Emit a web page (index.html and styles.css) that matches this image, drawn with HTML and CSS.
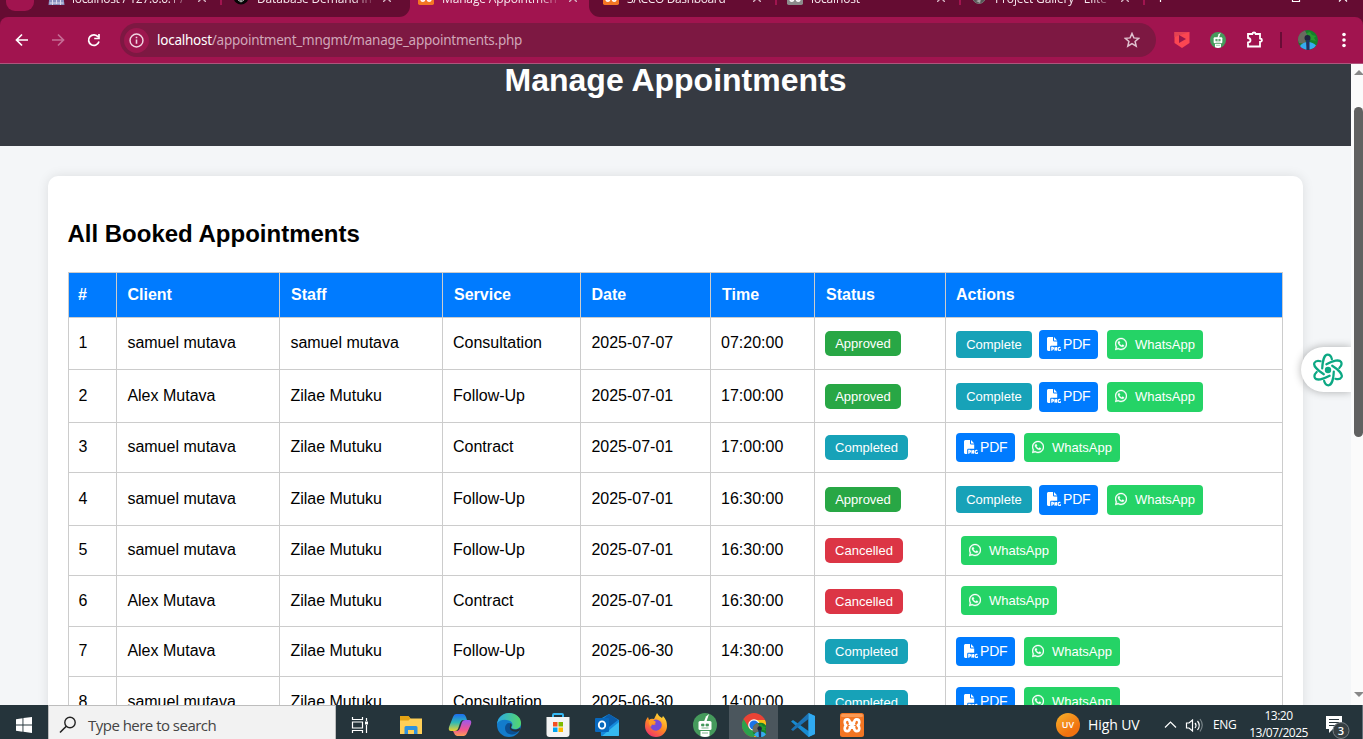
FILE: index.html
```html
<!DOCTYPE html>
<html lang="en">
<head>
<meta charset="utf-8">
<title>Manage Appointments</title>
<link rel="stylesheet" href="styles.css">
</head>
<body>
<svg class="defs" aria-hidden="true">
  <symbol id="wa" viewBox="0 0 448 512"><path stroke="#fff" stroke-width="14" d="M380.9 97.1C339 55.1 283.2 32 223.9 32c-122.4 0-222 99.6-222 222 0 39.1 10.2 77.3 29.6 111L0 480l117.7-30.9c32.4 17.7 68.9 27 106.1 27h.1c122.3 0 224.1-99.6 224.1-222 0-59.3-25.2-115-67.1-157zm-157 341.6c-33.2 0-65.7-8.9-94-25.7l-6.7-4-69.8 18.3L72 359.2l-4.4-7c-18.5-29.4-28.2-63.3-28.2-98.2 0-101.7 82.8-184.5 184.6-184.5 49.3 0 95.6 19.2 130.4 54.1 34.8 34.9 56.2 81.2 56.1 130.5 0 101.8-84.9 184.6-186.6 184.6zm101.2-138.2c-5.5-2.8-32.8-16.2-37.9-18-5.1-1.9-8.8-2.8-12.5 2.8-3.7 5.6-14.3 18-17.6 21.8-3.2 3.7-6.5 4.2-12 1.4-32.6-16.3-54-29.1-75.5-66-5.7-9.8 5.7-9.1 16.3-30.3 1.8-3.7.9-6.9-.5-9.7-1.4-2.8-12.5-30.1-17.1-41.2-4.5-10.8-9.1-9.3-12.5-9.5-3.2-.2-6.9-.2-10.6-.2-3.7 0-9.7 1.4-14.8 6.9-5.1 5.6-19.4 19-19.4 46.3 0 27.3 19.9 53.7 22.6 57.4 2.8 3.7 39.1 59.7 94.8 83.8 35.2 15.2 49 16.5 66.6 13.9 10.7-1.6 32.8-13.4 37.4-26.4 4.6-13 4.6-24.1 3.2-26.4-1.3-2.5-5-3.9-10.5-6.6z"/></symbol>
  <symbol id="file" viewBox="0 0 14 14"><path d="M1.600 0H6v3.600c0 .5.3.8.8.8H10.200v4.400H4.500c-.8 0-1.300.5-1.300 1.300V14H1.600C.7 14 0 13.400 0 12.500v-11C0 .6.7 0 1.600 0zM7 0l3.200 3.500H7z"/><path d="M4.800 13.800v-3.500h.8c1.200 0 1.200 1.800 0 1.800h-.8M8 13.800v-3.600l1.600 3.400v-3.500M13.400 10.600c-1.900-.8-2.200.5-2.200 1.400 0 1.500 1 1.800 2.200 1.300v-1.100" fill="none" stroke="#fff" stroke-width="1.200"/></symbol>
  <symbol id="xampp" viewBox="0 0 24 24"><rect width="24" height="24" rx="2.500" fill="#f37623"/><rect x="1" y="1" width="22" height="3" rx="1.500" fill="#fa9a55"/><path d="M10 9.800Q9.600 6.300 7.300 6.300 4.700 6.300 4.700 9.200 4.700 11.200 6.300 12.300 4.700 13.300 4.700 15.300 4.700 18.200 7.300 18.200 9.600 18.200 10 14.700H14Q14.400 18.200 16.700 18.200 19.300 18.200 19.300 15.300 19.300 13.300 17.700 12.300 19.300 11.200 19.300 9.200 19.300 6.300 16.700 6.300 14.400 6.300 14 9.800zM9 10.500l6 4M15 10.500l-6 4" fill="none" stroke="#fff" stroke-width="2.700" stroke-linejoin="round"/></symbol>
  <symbol id="bot" viewBox="0 0 24 24"><circle cx="12" cy="12" r="12" fill="#459a5c"/><g fill="#fff"><path d="M11 8.500l2-5 3-2.500-2.500 7.500z"/><rect x="5.500" y="8" width="13" height="9" rx="1.500"/><path d="M7.500 18h9v5q-4.500 2-9 0z"/></g><path d="M8.500 11h2.500v2H8.500zM13 11h2.500v2H13zM8.500 15h7M9 20h6" fill="#459a5c" stroke="#459a5c" stroke-width=".7"/></symbol>
  <symbol id="avatar" viewBox="0 0 20 20"><circle cx="10" cy="10" r="10" fill="#14812b"/><path d="M0 10a10 10 0 0 1 7-9.500l2 4L7 14l-6-1z" fill="#696b60"/><path d="M9 3l3-1 2 3 4 1-2 2 2 3-5-1-3-3z" fill="#279b2e"/><path d="M2 16q3-4 8-4t8 3.500A10 10 0 0 1 2 16z" fill="#36aaf0"/><circle cx="9.500" cy="8" r="3" fill="#20243f"/><path d="M8 10h3.500v10h-3z" fill="#20305d"/></symbol>
  <symbol id="close" viewBox="0 0 8 8"><path d="M0 0l8 8M8 0L0 8" fill="none" stroke="#d4b5c3" stroke-width="1.400"/></symbol>
</svg>

<div class="tabs">
  <div class="tabgroup left">
    <i class="tabsearch"></i>
    <div class="tab t1"><svg class="fav" viewBox="0 0 16 16"><path d="M0 16l1-9 3 3 2-6 3 5 2-4 2 5 2-2 1 8z" fill="#8890bf"/><path d="M1 14h14M4 16v-5M8 15v-5M12 16v-5" stroke="#d9d9ec"/></svg><span>localhost / 127.0.0.1 /</span><svg class="x"><use href="#close"/></svg></div>
    <i class="sep"></i>
    <div class="tab t2"><svg class="fav" viewBox="0 0 16 16"><circle cx="8" cy="8" r="7.500" fill="#060606"/><path d="M5 11l3 2 3-2V6M5 5v5l4 2" fill="none" stroke="#bbb"/></svg><span>Database Demand in</span><svg class="x"><use href="#close"/></svg></div>
  </div>
  <div class="tab active"><svg class="fav"><use href="#xampp"/></svg><span>Manage Appointmen</span><svg class="x"><use href="#close"/></svg></div>
  <div class="tabgroup right">
    <div class="tab t4"><svg class="fav"><use href="#xampp"/></svg><span>SACCO Dashboard</span><svg class="x"><use href="#close"/></svg></div>
    <i class="sep"></i>
    <div class="tab t5"><svg class="fav gray"><use href="#xampp"/></svg><span>localhost</span><svg class="x"><use href="#close"/></svg></div>
    <i class="sep"></i>
    <div class="tab t6"><svg class="fav" viewBox="0 0 16 16"><circle cx="8" cy="8" r="6.500" fill="#555" stroke="#777"/><path d="M5 12l5-2-1 4z" fill="#aaa"/></svg><span>Project Gallery - Elite</span><svg class="x"><use href="#close"/></svg></div>
    <i class="sep"></i>
    <svg class="winctl" viewBox="0 0 218 17"><path d="M15.500 0v2M147.500 0v1.500h7V0M194 1.500l2-2M200 -.5l2 2" fill="none" stroke="#fff" stroke-width="1.200"/></svg>
  </div>
</div>

<div class="toolwrap"><div class="toolbar">
  <svg class="nav" viewBox="0 0 120 46"><g fill="none" stroke="#fff" stroke-width="1.700"><path d="M28 23H17M22 17.500L16.500 23l5.500 5.500"/><path d="M52 23h11M58 17.500l5.500 5.500-5.500 5.500" stroke="#c56c94"/><path d="M98.200 20A5.300 5.300 0 1 0 99 24.500M99 17v4.500h-4.800"/></g></svg>
  <div class="omnibox">
    <svg class="info" viewBox="0 0 24 24"><circle cx="12" cy="12" r="12" fill="#9c174e"/><circle cx="12" cy="12" r="6.200" fill="none" stroke="#f0d5e1" stroke-width="1.400"/><path d="M12 11v4.200M12 8.500v1.400" stroke="#f0d5e1" stroke-width="1.500"/></svg>
    <span class="url"><b>localhost</b>/appointment_mngmt/manage_appointments.php</span>
    <svg class="star" viewBox="0 0 16 16"><path d="M8 1.500l1.900 4.400 4.800.4-3.600 3.100 1.100 4.700L8 11.600l-4.200 2.500 1.100-4.700-3.600-3.100 4.800-.4z" fill="none" stroke="#e1c3d0" stroke-width="1.500"/></svg>
  </div>
  <svg class="exts" viewBox="0 0 207 46">
    <path d="M18.500 15h15v11l-7.500 5-7.500-5z" fill="#fb4652"/><path d="M18.500 15h15l-15 5z" fill="#e34152"/><path d="M23 18l7 4-7 4z" fill="#98164b"/>
    <use href="#bot" x="54" y="15" width="16" height="16"/>
    <path d="M92 17h4.300q.2-1.500 1.700-1.500t1.700 1.500h4.300v4.500q2 .3 2 1.700t-2 1.700v4.600H92v-4q2.500-.2 2.500-2.200T92 21z" fill="none" stroke="#fff" stroke-width="1.800"/>
    <path d="M125 15v16" stroke="#690c36" stroke-width="2"/>
    <use href="#avatar" x="142" y="13" width="20" height="20"/>
    <g fill="#fff"><circle cx="188" cy="17.500" r="1.800"/><circle cx="188" cy="23" r="1.800"/><circle cx="188" cy="28.500" r="1.800"/></g>
  </svg>
</div></div>

<div class="viewport">
  <main class="page">
    <header class="hero"><h1>Manage Appointments</h1></header>
    <section class="card">
      <h2>All Booked Appointments</h2>
      <table>
        <colgroup><col class="c1"><col class="c2"><col class="c2"><col class="c4"><col class="c5"><col class="c6"><col class="c7"><col></colgroup>
        <thead><tr><th>#</th><th>Client</th><th>Staff</th><th>Service</th><th>Date</th><th>Time</th><th>Status</th><th>Actions</th></tr></thead>
        <tbody>
          <tr class="first"><td>1</td><td>samuel mutava</td><td>samuel mutava</td><td>Consultation</td><td>2025-07-07</td><td>07:20:00</td><td><span class="badge ok">Approved</span></td><td><div class="acts"><a class="done">Complete</a><a class="pdf"><svg><use href="#file"/></svg>PDF</a><a class="wa"><svg><use href="#wa"/></svg>WhatsApp</a></div></td></tr>
          <tr class="tall"><td>2</td><td>Alex Mutava</td><td>Zilae Mutuku</td><td>Follow-Up</td><td>2025-07-01</td><td>17:00:00</td><td><span class="badge ok">Approved</span></td><td><div class="acts"><a class="done">Complete</a><a class="pdf"><svg><use href="#file"/></svg>PDF</a><a class="wa"><svg><use href="#wa"/></svg>WhatsApp</a></div></td></tr>
          <tr><td>3</td><td>samuel mutava</td><td>Zilae Mutuku</td><td>Contract</td><td>2025-07-01</td><td>17:00:00</td><td><span class="badge fin">Completed</span></td><td><div class="acts"><a class="pdf"><svg><use href="#file"/></svg>PDF</a><a class="wa"><svg><use href="#wa"/></svg>WhatsApp</a></div></td></tr>
          <tr class="tall"><td>4</td><td>samuel mutava</td><td>Zilae Mutuku</td><td>Follow-Up</td><td>2025-07-01</td><td>16:30:00</td><td><span class="badge ok">Approved</span></td><td><div class="acts"><a class="done">Complete</a><a class="pdf"><svg><use href="#file"/></svg>PDF</a><a class="wa"><svg><use href="#wa"/></svg>WhatsApp</a></div></td></tr>
          <tr><td>5</td><td>samuel mutava</td><td>Zilae Mutuku</td><td>Follow-Up</td><td>2025-07-01</td><td>16:30:00</td><td><span class="badge no">Cancelled</span></td><td><div class="acts only"><a class="wa"><svg><use href="#wa"/></svg>WhatsApp</a></div></td></tr>
          <tr class="mid"><td>6</td><td>Alex Mutava</td><td>Zilae Mutuku</td><td>Contract</td><td>2025-07-01</td><td>16:30:00</td><td><span class="badge no">Cancelled</span></td><td><div class="acts only"><a class="wa"><svg><use href="#wa"/></svg>WhatsApp</a></div></td></tr>
          <tr><td>7</td><td>Alex Mutava</td><td>Zilae Mutuku</td><td>Follow-Up</td><td>2025-06-30</td><td>14:30:00</td><td><span class="badge fin">Completed</span></td><td><div class="acts"><a class="pdf"><svg><use href="#file"/></svg>PDF</a><a class="wa"><svg><use href="#wa"/></svg>WhatsApp</a></div></td></tr>
          <tr class="mid"><td>8</td><td>samuel mutava</td><td>Zilae Mutuku</td><td>Consultation</td><td>2025-06-30</td><td>14:00:00</td><td><span class="badge fin">Completed</span></td><td><div class="acts"><a class="pdf"><svg><use href="#file"/></svg>PDF</a><a class="wa"><svg><use href="#wa"/></svg>WhatsApp</a></div></td></tr>
        </tbody>
      </table>
    </section>
    <div class="helper"><svg viewBox="-16 -17 32 34"><defs><path id="orb" d="M-5.800 -1.500C-5.500 -9 -3.500 -15.300 -.5 -15.300C2 -15.300 3.300 -13.500 3.900 -10.800"/></defs><circle r="3.200" fill="#0ba883"/><g fill="none" stroke="#0ba883" stroke-width="2.200" stroke-linecap="round"><use href="#orb"/><use href="#orb" transform="rotate(60)"/><use href="#orb" transform="rotate(120)"/><use href="#orb" transform="rotate(180)"/><use href="#orb" transform="rotate(240)"/><use href="#orb" transform="rotate(300)"/></g></svg></div>
  </main>
  <div class="scroll"><i class="up"></i><i class="thumb"></i><i class="down"></i></div>
</div>

<footer class="taskbar">
  <div class="start"><svg width="16" height="16" viewBox="0 0 16 16"><path d="M0 2.200L6.500 1.300V7.500H0zM7.400 1.100L16 0v7.500H7.400zM0 8.400h6.500v6.300L0 13.800zM7.400 8.400H16V16l-8.600-1.200z" fill="#fff"/></svg></div>
  <div class="search"><svg width="18" height="18" viewBox="0 0 18 18"><circle cx="11" cy="6.500" r="5.200" fill="none" stroke="#222" stroke-width="1.400"/><path d="M7.300 10.200L1 16.500" stroke="#222" stroke-width="1.600"/></svg><span>Type here to search</span></div>
  <div class="view"><svg width="18" height="16" viewBox="0 0 18 16"><path d="M1.500 0v2.500h10V0M1.500 16v-2.500h10V16M1.500 5h10v6h-10zM15.500 1v3M15.500 8v8" fill="none" stroke="#fff" stroke-width="1.200"/><rect x="14" y="4.500" width="3" height="3" fill="#fff"/></svg></div>
  <div class="apps">
    <div><svg viewBox="0 0 24 24"><path d="M1 3.500h8.500l2 2H23V21H1z" fill="#ffcf57"/><path d="M1 3h8.500l2 2.500-2 2H1z" fill="#e4a314"/><path d="M5.500 21v-6.500q0-1.500 1.500-1.500h10q1.500 0 1.500 1.500V21h-3.500v-4h-6v4z" fill="#2f92de"/></svg></div>
    <div><svg viewBox="0 0 24 24"><defs><linearGradient id="ca" x2="0" y2="1"><stop stop-color="#1b6df0"/><stop offset=".5" stop-color="#30b9b5"/><stop offset="1" stop-color="#f1d12c"/></linearGradient><linearGradient id="cb" x2="0" y2="1"><stop stop-color="#9b58ed"/><stop offset=".6" stop-color="#f05591"/><stop offset="1" stop-color="#fb9e55"/></linearGradient></defs><path d="M8 1h7q2 0 3 3l1 3h-4q-2 0-3 3l-2 6q-1 2-3 2H3q-3 0-2-4L5 4q1-3 3-3z" fill="url(#ca)"/><path d="M16 23H9q-2 0-3-3l-1-2h4q2 0 3-3l2-6q1-2 3-2h4q3 0 2 4l-4 9q-1 3-3 3z" fill="url(#cb)"/></svg></div>
    <div><svg viewBox="0 0 24 24"><defs><linearGradient id="ed"><stop stop-color="#2ba8e7"/><stop offset="1" stop-color="#55d86a"/></linearGradient></defs><circle cx="12" cy="12" r="12" fill="#137ccb"/><path d="M0 11C1 4 6 0 12 0c7 0 12 4.500 12 10 0 4-3 6-6 6-3 0-4-1-3-2.500 1-2 .5-5-3-6C7 6 2 7 0 11z" fill="url(#ed)"/><path d="M8 15c0-3 2-5 4-5 2 .5 3 2 2 4-1 2 1 4 4 4q2.500 0 4-1c-2 4-5 5-8 4.500-4-.5-6-3-6-6.500z" fill="#0c4f91"/><path d="M13.500 10c2 1.500 1 3 .5 4-.5 2.500 5 4 9.500.500l-1 3.500c-5 2-11-.5-9.500-4.500z" fill="#263238"/></svg></div>
    <div><svg viewBox="0 0 24 24"><path d="M7 5V2q0-1 1-1h8q1 0 1 1v3" fill="none" stroke="#35b8f3" stroke-width="2"/><path d="M.5 4h23v17q0 3-3 3h-17q-3 0-3-3z" fill="#f3f3f3"/><path d="M7 9h4.500v4.500H7z" fill="#f25022"/><path d="M12.500 9H17v4.500h-4.500z" fill="#7fba00"/><path d="M7 14.500h4.500V19H7z" fill="#00a4ef"/><path d="M12.500 14.500H17V19h-4.500z" fill="#ffb900"/></svg></div>
    <div><svg viewBox="0 0 24 24"><path d="M5 6l9-5 10 6v15q0 1-1 1H6z" fill="#1689dc"/><path d="M9 5l5-4 9 6-9 7z" fill="#0b5ca9"/><path d="M24 9v13q0 1-1 1H7z" fill="#35baf1"/><rect y="5" width="14" height="14" rx="1" fill="#0868bd"/><ellipse cx="7" cy="12" rx="3.200" ry="3.600" fill="none" stroke="#fff" stroke-width="1.900"/></svg></div>
    <div><svg viewBox="0 0 24 24"><defs><linearGradient id="ff" x1=".8" x2=".2" y2="1"><stop stop-color="#ffe33b"/><stop offset=".5" stop-color="#ff8b20"/><stop offset="1" stop-color="#f02c71"/></linearGradient></defs><path d="M1 13q0-6 3-9l1 3q2-2 5-1l3-6q2 4 5 5l1-2q4 4 4 10a11 11 0 0 1-22 0z" fill="url(#ff)"/><path d="M8 8q4-3 8 0 3 3 1 7-3 4-8 2-4-3-2-6 2 2 5 0-3-1-4-3z" fill="#744bd8"/><path d="M5 7q4-1 7 2-1 2-4 2l-1 3q-3-3-2-7z" fill="#ff9b27"/></svg></div>
    <div><svg><use href="#bot"/></svg></div>
    <div class="current"><svg viewBox="0 0 24 24"><circle cx="12" cy="12" r="12" fill="#ea4335"/><path d="M1.600 6A12 12 0 0 0 12 24l5-9-5 2-5-2z" fill="#2ba24c"/><path d="M23 7H13l4 8-5 9A12 12 0 0 0 23 7z" fill="#fbc116"/><circle cx="12" cy="12" r="5.800" fill="#fff"/><circle cx="12" cy="12" r="4.600" fill="#1a73e8"/><use href="#avatar" x="10.500" y="9.500" width="15" height="15"/></svg></div>
    <div><svg viewBox="0 0 24 24"><path d="M17.500 0L24 3v18l-6.500 3L0 8.500 2 7l15.500 11z" fill="#178bd2"/><path d="M17.500 0v6L2 18l-2-1.500z" fill="#1c73b5"/><path d="M17.500 0L24 3v18l-6.500 3z" fill="#30aaf1"/></svg></div>
    <div><svg><use href="#xampp"/></svg></div>
  </div>
  <div class="tray">
    <span class="uv">UV</span><span class="weather">High UV</span>
    <svg class="ctl" viewBox="0 0 40 20"><g fill="none" stroke="#fff" stroke-width="1.200"><path d="M1 12.500l5.500-5.500 5.500 5.500M22.500 8h2.500l3.500-3v11L25 13h-2.500zM31 8q2 2.300 0 5M33.500 6q3.500 4.300 0 9"/><path d="M36 4q4.500 6 0 12.500" stroke="#788488"/></g></svg>
    <span class="lang">ENG</span>
    <span class="clock"><span>13:20</span><span>13/07/2025</span></span>
    <svg class="note" viewBox="0 0 28 24"><path d="M1 1h16v13h-9l-4 4v-4H1z" fill="#fff"/><path d="M4 4.500h10M4 7.500h10M4 10.500h8" stroke="#27343a"/><circle cx="16" cy="15.500" r="8" fill="#363f43" stroke="#788085"/><text x="16" y="19.500" class="count">3</text></svg>
    <i class="peek"></i>
  </div>
</footer>
</body>
</html>
```
FILE: styles.css
```css
* { box-sizing: border-box; }
body { margin: 0; width: 1363px; height: 739px; overflow: hidden; font-family: "Liberation Sans", Arial, sans-serif; color: #000; }
.defs { position: absolute; width: 0; height: 0; }
svg { display: block; flex: none; }

/* tab strip */
.tabs { display: flex; height: 17px; overflow: hidden; background: #a1144f; font: 12px/18px "Open Sans", "Noto Sans", sans-serif; color: #f6e8ee; }
.tabgroup { display: flex; height: 17px; background: #650c32; }
.left { width: 410px; border-radius: 0 0 11px 0; }
.right { width: 774px; border-radius: 0 0 0 11px; }
.tabsearch { width: 28px; height: 11px; margin: 0 13px 0 6px; background: #a1144f; border-radius: 0 0 9px 9px; }
.tab { display: flex; width: 184px; height: 17px; align-items: flex-start; }
.tab span { width: 123px; margin: -10px 0 0 8px; white-space: nowrap; overflow: hidden; letter-spacing: -0.15px; -webkit-mask-image: linear-gradient(90deg, #000 78%, transparent 97%); }
.fav { width: 16px; height: 16px; margin-top: -11px; }
.gray { filter: grayscale(1); }
.x { width: 8px; height: 8px; margin: -6px 0 0 3px; }
.t1 { width: 174px; padding-left: 0; margin-left: 1px; margin-right: -2px; }
.t1 .fav { width: 17px; }
.t1 span { margin-left: 7px; letter-spacing: -.3px; }
.t2 { padding-left: 11px; width: 187px; }
.active { width: 179px; padding-left: 8px; }
.active span { width: 124px; }
.t4 { width: 186px; padding-left: 14px; }
.t4 span { letter-spacing: -.35px; }
.t5, .t6 { width: 182px; padding-left: 10px; }
.sep { width: 2px; height: 5px; background: #a1144f; }
.winctl { width: 218px; height: 17px; }

/* toolbar */
.toolwrap { background: #650c32; height: 47px; }
.toolbar { display: flex; align-items: center; height: 47px; background: #a1144f; border-bottom: 1px solid #ae557d; border-radius: 8px 8px 0 0; }
.nav { width: 120px; height: 46px; }
.omnibox { display: flex; align-items: center; width: 1036px; height: 34px; border-radius: 17px; background: #7d1842; padding: 0 16px 0 4px; }
.info { width: 25px; height: 25px; }
.url { flex: 1; margin-left: 8px; font: 13.5px/20px "Noto Sans", "Open Sans", sans-serif; color: #d0a6b8; letter-spacing: -0.25px; white-space: nowrap; }
.url b { font-weight: 400; color: #fff; }
.star { width: 16px; height: 16px; }
.exts { width: 207px; height: 46px; }

/* page */
.viewport { display: flex; height: 641px; overflow: hidden; }
.page { position: relative; width: 1351px; height: 641px; overflow: hidden; background: #f4f6f8; }
.hero { height: 82px; background: #363a42; color: #fff; text-align: center; overflow: hidden; }
.hero h1 { margin: 0; font-size: 32px; line-height: 32px; }
.card { width: 1255px; height: 600px; margin: 30px 0 0 48px; padding: 42px 20px 0; background: #fff; border-radius: 10px; box-shadow: 0 0 12px rgba(0,0,0,.1); }
h2 { margin: 0 0 0 -.6px; font-size: 24px; line-height: 32px; height: 54px; }
table { width: 1215px; table-layout: fixed; border-collapse: separate; border-spacing: 0; border: solid #ccc; border-width: 1px 0 0 1px; font-size: 16px; }
.c1 { width: 48px; } .c2 { width: 163px; } .c4 { width: 138px; } .c5 { width: 130px; } .c6 { width: 104px; } .c7 { width: 131px; }
th, td { border: solid #ccc; border-width: 0 1px 1px 0; padding: 15px 10px 0; text-align: left; vertical-align: top; line-height: 18px; white-space: nowrap; }
th { height: 45px; padding: 13px 10px 0 11px; background: #007bff; color: #fff; }
th:first-child { padding-left: 9px; }
th:nth-child(2), th:nth-child(5) { padding-left: 10.5px; }
th:last-child { padding-left: 10px; }
td { height: 50px; }
td:nth-child(1) { padding-left: 9.5px; }
td:nth-child(2), td:nth-child(3), td:nth-child(5) { padding-left: 10.4px; }
td:nth-child(7) { padding-top: 12px; }
td:nth-child(8) { padding-top: 10px; }
.first td { height: 52px; padding-top: 16px; }
.tall td { height: 53px; padding-top: 17px; }
.mid td { height: 51px; padding-top: 16px; }
.first td:nth-child(7), .mid td:nth-child(7) { padding-top: 13px; }
.tall td:nth-child(7) { padding-top: 14px; }
.first td:nth-child(8), .tall td:nth-child(8) { padding-top: 12px; }
.mid td:nth-child(8) { padding-top: 10px; }
.badge { display: block; width: 76px; height: 25px; border-radius: 5px; color: #fff; font-size: 13px; line-height: 25px; text-align: center; }
.ok { background: #28a745; }
.fin { width: 83px; background: #17a2b8; }
.no { width: 78px; background: #dc3545; }
.acts { display: flex; align-items: center; height: 29px; color: #fff; font-size: 13px; }
.acts a { display: flex; align-items: center; border-radius: 4px; }
.only { padding-left: 5px; }
.done { width: 76px; height: 27px; margin-right: 7px; justify-content: center; background: #17a2b8; }
.pdf { width: 59px; height: 29px; margin-right: 9px; padding: 0 0 1px 8px; gap: 2px; font-size: 14px; letter-spacing: -.2px; background: #007bff; }
.tall .pdf, .tall .wa { height: 30px; }
.pdf svg { width: 14px; height: 14px; fill: #fff; }
.wa { width: 96px; height: 29px; padding-left: 8px; gap: 8px; background: #25d366; }
.wa svg { width: 12px; height: 14px; margin-top: -1px; fill: #fff; }
.helper { position: absolute; left: 1301px; top: 283px; width: 50px; height: 45px; padding: 6px 0 0 11px; border-radius: 23px 0 0 23px; background: #fff; box-shadow: 0 0 8px rgba(0,0,0,.3); }
.helper svg { width: 32px; height: 34px; }
.scroll { display: flex; flex-direction: column; align-items: center; width: 12px; padding: 6px 0 8px 3px; background: #fbfbfb; }
.up { border: solid transparent; border-width: 0 5px 5px; border-bottom-color: #888; }
.thumb { width: 9px; height: 330px; margin-top: 32px; border-radius: 5px; background: #616161; }
.down { margin-top: auto; border: solid transparent; border-width: 5px 5px 0; border-top-color: #888; }

/* taskbar */
.taskbar { display: flex; height: 34px; background: #25343b; color: #fff; font-family: "Open Sans", "Noto Sans", sans-serif; }
.start, .view { display: flex; width: 48px; align-items: center; justify-content: center; padding-top: 6px; }
.search { display: flex; align-items: center; width: 288px; padding: 5px 0 0 10px; gap: 11px; background: #f2f2f2; border: 1px solid #bdbdbd; border-bottom: 0; color: #444; font-size: 15px; letter-spacing: -.52px; }
.search svg { margin-top: -1px; }
.apps { display: flex; margin-left: 2px; }
.apps div { display: flex; width: 49px; height: 34px; padding-top: 6px; align-items: center; justify-content: center; }
.apps .current { background: #4b565d; }
.apps svg { width: 24px; height: 24px; }
.tray { display: flex; align-items: center; margin-left: 180px; padding-top: 5px; white-space: nowrap; }
.uv { width: 24px; height: 24px; border-radius: 50%; background: linear-gradient(145deg, #f7b32b, #f17210 70%); font-size: 9px; font-weight: 600; line-height: 24px; text-align: center; }
.weather { width: 76px; margin-left: 8px; font-size: 14px; letter-spacing: -.1px; }
.ctl { width: 40px; height: 20px; }
.lang { width: 37px; margin-left: 9px; font-size: 12px; letter-spacing: -.3px; }
.clock { display: flex; flex-direction: column; align-items: center; width: 57px; height: 34px; font-size: 12px; line-height: 17px; letter-spacing: -.5px; margin-top: -2px; }
.note { width: 28px; height: 24px; margin-left: 18px; margin-top: 5px; }
.count { font: 600 11px "Open Sans", sans-serif; fill: #fff; text-anchor: middle; }
.peek { width: 1px; height: 34px; margin: -5px 0 0 9px; background: #64717a; }
```
